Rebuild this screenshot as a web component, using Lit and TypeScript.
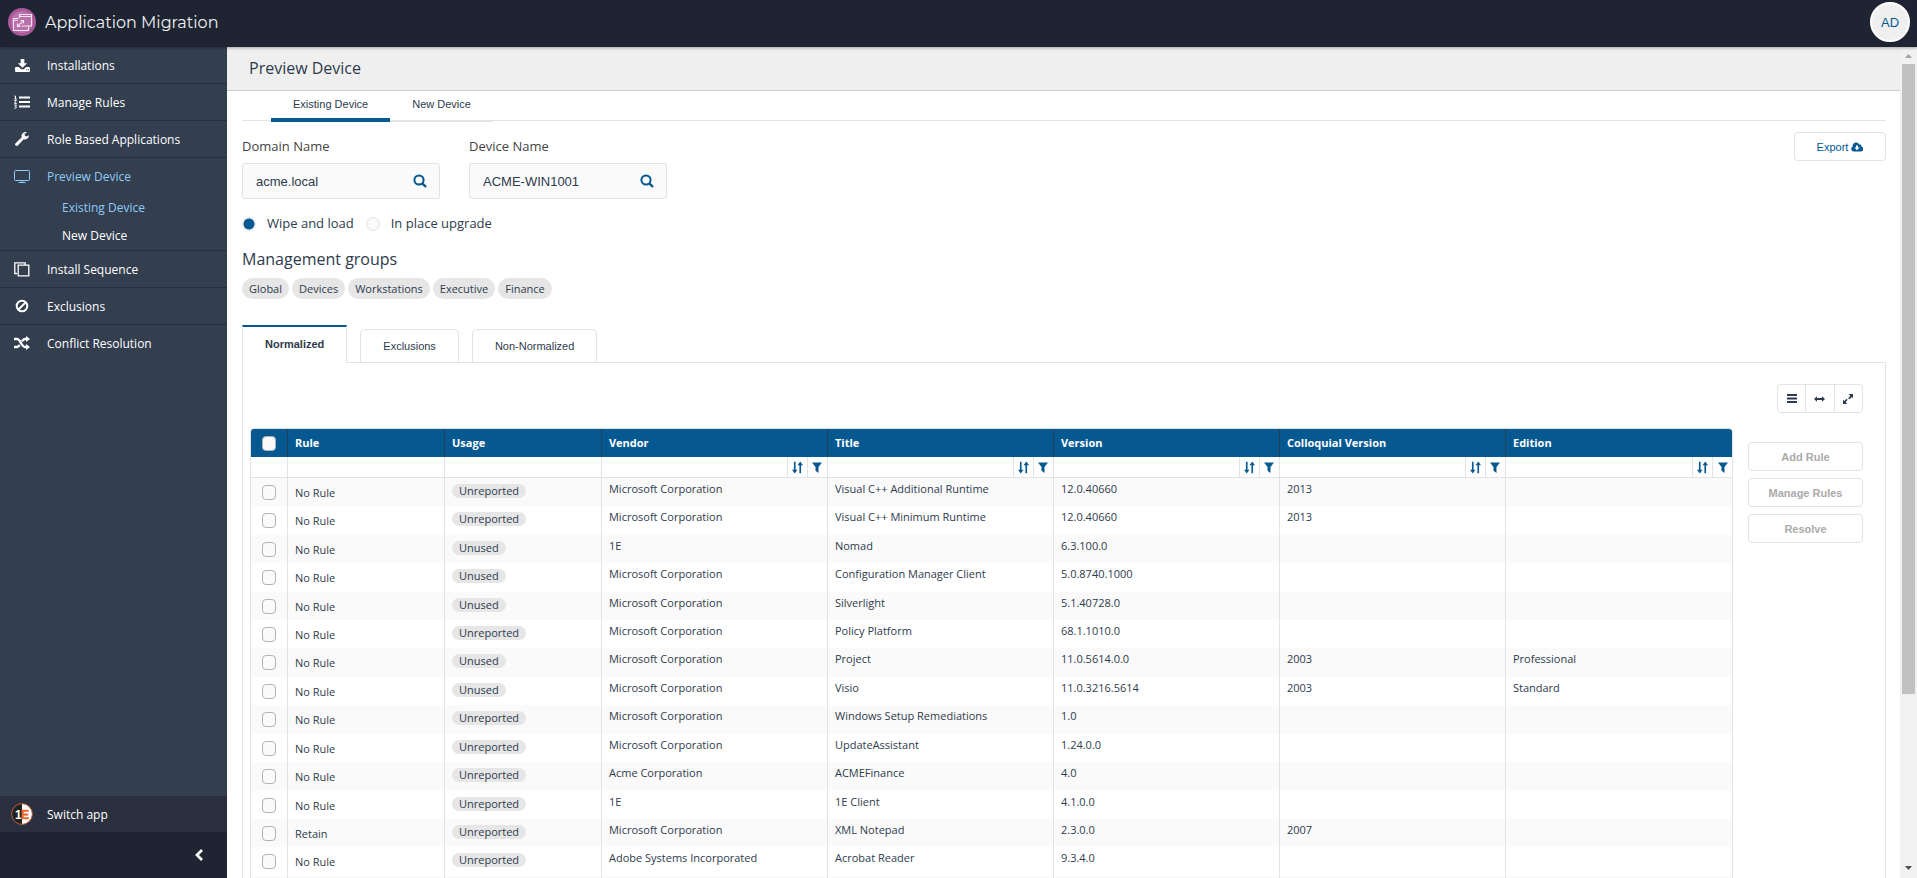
import { LitElement, html, css, svg, TemplateResult } from "lit";
import { customElement, state } from "lit/decorators.js";

const icon = (box: string, w: number, h: number, body: TemplateResult) =>
  html`<svg viewBox=${box} width=${w} height=${h} aria-hidden="true">${body}</svg>`;

const icons = {
  download: icon("0 0 16 14", 15, 13, svg`<path fill="currentColor" d="M6 0h4v4.500h3L8 9.500 3 4.500h3zM1 8.500h3.200L6.500 11h3l2.300-2.500H15a1 1 0 0 1 1 1V13a1 1 0 0 1-1 1H1a1 1 0 0 1-1-1V9.500a1 1 0 0 1 1-1zM12 11v1h1v-1zm2 0v1h1v-1z"/>`),
  list: icon("0 0 16 14", 16, 14, svg`<path fill="currentColor" d="M5 1.500h11v2H5zM5 6h11v2H5zM5 10.500h11v2H5z"/><path fill="none" stroke="currentColor" stroke-width="1" d="M.5 1h1v3M.2 4h2.600M.3 5.500h2L.5 8.400h2.300M.3 10h2.200L1.300 11.500c2 0 1.500 2-1 1.700"/>`),
  wrench: icon("0 0 14 14", 14, 14, svg`<path fill="currentColor" d="M13.800 3.200 11.500 4.600 9.700 3.500V1.700L12 .3C10 -.5 7.600.6 6.800 2.500c-.4.900-.4 1.900 0 2.800L.6 11.200c-.8.800-.6 1.800 0 2.300.7.600 1.600.5 2.200-.1l5.900-6.200c3 .9 5.600-1.400 5.100-4z"/>`),
  screen: icon("0 0 16 13", 16, 13, svg`<path fill="none" stroke="currentColor" d="M1.500.5h13a1 1 0 0 1 1 1v8a1 1 0 0 1-1 1h-13a1 1 0 0 1-1-1v-8a1 1 0 0 1 1-1zM4.500 12.500h7M8 10.500v2"/>`),
  copy: icon("0 0 16 15", 16, 15, svg`<path fill="none" stroke="currentColor" stroke-width="1.300" d="M4.200 3.200h10.600v10.600H4.200zM3 11.500H.8V.8h10.400V3"/>`),
  ban: icon("0 0 14 14", 14, 14, svg`<g fill="none" stroke="currentColor" stroke-width="2"><circle cx="7" cy="7" r="5.300"/><path d="M3.500 10.500l7-7"/></g>`),
  shuffle: icon("0 0 16 14", 16, 14, svg`<path fill="none" stroke="currentColor" stroke-width="2.300" d="M0 3h3c3.500 0 4.500 8 8 8h2M0 11h3c1.200 0 2-1 2.700-2M8 5.300C8.800 4 9.600 3 11 3h2"/><path fill="currentColor" d="M12 0l4 3-4 3zM12 8l4 3-4 3z"/>`),
  search: icon("0 0 14 14", 14, 14, svg`<g fill="none" stroke="currentColor" stroke-width="2"><circle cx="6" cy="6" r="4.600"/><path stroke-width="2.400" d="M9.300 9.300l3.700 3.700"/></g>`),
  cloud: icon("0 0 13 10", 12, 10, svg`<path fill="currentColor" fill-rule="evenodd" d="M3 10a3 3 0 0 1-1.200-5.600C1.600 2 3.200.1 5.500.1c1.700 0 2.900.8 3.500 2.300 1.200-.4 2.500.6 2.200 2.100A2.800 2.800 0 0 1 10.400 10zM5.400 3.300v2.200H3.600L6.500 8.600l2.900-3.100H7.600V3.300z"/>`),
  sort: icon("0 0 12 13", 11, 13, svg`<path fill="none" stroke="currentColor" stroke-width="1.800" d="M3 .2v10M9 2.500v10.300"/><path fill="currentColor" d="M0 9h6l-3 4zM6 4h6L9 0z"/>`),
  funnel: icon("0 0 10 11", 10, 11, svg`<path fill="currentColor" d="M0 .5h10L6.500 5v6L3.500 8.800V5z"/>`),
  bars: icon("0 0 10 9", 10, 9, svg`<path fill="currentColor" d="M0 0h10v2H0zM0 3.500h10v2H0zM0 7h10v2H0z"/>`),
  wide: icon("0 0 11 6", 11, 6, svg`<path fill="currentColor" d="M0 3l3-2.800V2h5V.2L11 3 8 5.800V4H3v1.800z"/>`),
  expand: icon("0 0 10 10", 10, 10, svg`<path fill="currentColor" d="M5.700 0H10v4.300L8.700 3 6.500 5.200l-1.300-1L7.300 1.800zM4.300 10H0V5.700L1.300 7l2.200-2.200 1.100 1L2.700 8.200z"/>`),
  back: icon("0 0 8 12", 8, 12, svg`<path fill="none" stroke="currentColor" stroke-width="2.700" d="M7 1 2 6l5 5"/>`),
  logo: icon("0 0 28 28", 28, 28, svg`<circle cx="14" cy="14" r="14" fill="#a9599a"/><circle cx="14" cy="14" r="11" fill="#ba72aa"/><g fill="none" stroke="#f6e4f2" stroke-width="1.100"><path d="M11.500 10V6.500h12v11.500h-3.500M11.500 8.500h12M20.500 18v4.500h-15v-12h5M5.500 12.300h4.500"/><path d="M9.500 18.500l6-6M12.500 12.500h3v3M9.500 15.500v3h3M13.500 18h7"/></g>`),
};

const nav: { label: string; icon: unknown; open?: boolean }[] = [
  { label: "Installations", icon: icons.download },
  { label: "Manage Rules", icon: icons.list },
  { label: "Role Based Applications", icon: icons.wrench },
  { label: "Preview Device", icon: icons.screen, open: true },
  { label: "Install Sequence", icon: icons.copy },
  { label: "Exclusions", icon: icons.ban },
  { label: "Conflict Resolution", icon: icons.shuffle },
];

const columns = ["Rule", "Usage", "Vendor", "Title", "Version", "Colloquial Version", "Edition"];
const ms = "Microsoft Corporation";
const rows: string[][] = [
  ["No Rule", "Unreported", ms, "Visual C++ Additional Runtime", "12.0.40660", "2013", ""],
  ["No Rule", "Unreported", ms, "Visual C++ Minimum Runtime", "12.0.40660", "2013", ""],
  ["No Rule", "Unused", "1E", "Nomad", "6.3.100.0", "", ""],
  ["No Rule", "Unused", ms, "Configuration Manager Client", "5.0.8740.1000", "", ""],
  ["No Rule", "Unused", ms, "Silverlight", "5.1.40728.0", "", ""],
  ["No Rule", "Unreported", ms, "Policy Platform", "68.1.1010.0", "", ""],
  ["No Rule", "Unused", ms, "Project", "11.0.5614.0.0", "2003", "Professional"],
  ["No Rule", "Unused", ms, "Visio", "11.0.3216.5614", "2003", "Standard"],
  ["No Rule", "Unreported", ms, "Windows Setup Remediations", "1.0", "", ""],
  ["No Rule", "Unreported", ms, "UpdateAssistant", "1.24.0.0", "", ""],
  ["No Rule", "Unreported", "Acme Corporation", "ACMEFinance", "4.0", "", ""],
  ["No Rule", "Unreported", "1E", "1E Client", "4.1.0.0", "", ""],
  ["Retain", "Unreported", ms, "XML Notepad", "2.3.0.0", "2007", ""],
  ["No Rule", "Unreported", "Adobe Systems Incorporated", "Acrobat Reader", "9.3.4.0", "", ""],
];

@customElement("app-table")
class AppTable extends LitElement {
  static styles = css`
    :host { display: block; flex: 1; min-width: 0; }
    .frame { border: 1px solid #e3e3e3; border-radius: 4px 4px 0 0; overflow: hidden; }
    .grid { width: 100%; table-layout: fixed; border-collapse: separate; border-spacing: 0; font-size: 11px; line-height: 16px; color: #2e3b4c; }
    .pick { width: 37px; }
    .narrow { width: 10.6%; }
    th, td { box-sizing: border-box; padding: 0 7px; text-align: left; white-space: nowrap; overflow: hidden; border-right: 1px solid #e3e3e3; }
    th:last-child, td:last-child { border-right: 0; }
    .head th { height: 28px; background: #065891; color: #fff; border-right-color: #24405c; font-weight: 700; }
    .filters td { height: 21px; padding: 0; border-bottom: 1px solid #e3e3e3; }
    .tools { display: flex; justify-content: flex-end; height: 20px; }
    .tool { width: 20px; padding: 0; border: 0; border-left: 1px solid #e3e3e3; background: none; color: #065891; display: grid; place-items: center; }
    .row td { height: 28px; vertical-align: top; padding-top: 3px; }
    .row:nth-child(7n + 2) td, .row:nth-child(7n + 4) td, .row:nth-child(7n) td { height: 29px; }
    .row:nth-child(odd) td { background: #fafafa; }
    .row .rule { padding-top: 7px; }
    .row .usage { padding-top: 6px; }
    .center, .row .center { text-align: center; padding: 0; }
    .row .center { padding-top: 7px; }
    .badge { display: inline-block; vertical-align: top; height: 14px; line-height: 14px; padding: 0 7px; border-radius: 7px; background: #e6e6e6; }
    .tick { appearance: none; display: block; box-sizing: border-box; width: 14px; height: 15px; margin: 0 auto; border: 1px solid #b3b3b3; border-radius: 4px; background: #fafafa; }
  `;
  render() {
    return html`<div class="frame"><table class="grid">
      <colgroup><col class="pick" /><col class="narrow" /><col class="narrow" /><col /><col /><col /><col /><col /></colgroup>
      <thead>
        <tr class="head"><th class="center"><input class="tick" type="checkbox" aria-label="Select all" /></th>${columns.map((c) => html`<th>${c}</th>`)}</tr>
        <tr class="filters"><td></td>${columns.map((c, i) => html`<td>${i < 2 ? "" : html`<div class="tools">
          <button class="tool" aria-label="Sort by ${c}">${icons.sort}</button><button class="tool" aria-label="Filter ${c}">${icons.funnel}</button></div>`}</td>`)}</tr>
      </thead>
      <tbody>
        ${rows.map((r) => html`<tr class="row">
          <td class="center"><input class="tick" type="checkbox" aria-label="Select ${r[3]}" /></td>
          <td class="rule">${r[0]}</td><td class="usage"><span class="badge">${r[1]}</span></td>
          ${r.slice(2).map((v) => html`<td>${v}</td>`)}</tr>`)}
        <tr class="row"><td></td>${columns.map(() => html`<td></td>`)}</tr>
      </tbody></table></div>`;
  }
}

@customElement("app-root")
class AppRoot extends LitElement {
  @state() mode = "wipe";

  static styles = css`
    :host { display: grid; grid-template: 47px minmax(0, 1fr) / 227px minmax(0, 1fr); height: 100vh; overflow: hidden; font-family: "Open Sans", sans-serif; color: #2e3b4c; background: #fff; }
    button, input { font-family: inherit; }
    a { color: inherit; text-decoration: none; }
    svg { display: block; }
    .top { grid-column: 1 / -1; z-index: 1; display: flex; align-items: center; justify-content: space-between; padding: 0 7px 3px 8px; background: #1e2431; box-shadow: 0 1px 3px rgba(0, 0, 0, 0.3); color: #fff; }
    .brand { display: flex; align-items: center; gap: 9px; font-family: Montserrat, "Open Sans", sans-serif; font-size: 16px; color: #eef0f3; }
    .avatar { width: 40px; height: 40px; border: 2px solid #fff; box-sizing: border-box; border-radius: 50%; background: #efefef; color: #065891; font: 13px "Liberation Sans", sans-serif; padding: 0; }
    .side { display: flex; flex-direction: column; min-height: 0; background: #333e4f; color: #fff; font-size: 12px; font-weight: 500; }
    .menu { flex: 1; margin: 0; padding: 0; list-style: none; }
    .entry { border-bottom: 1px solid #262f3d; }
    .entry:last-child { border-bottom: 0; }
    .link, .switch { display: grid; grid-template-columns: 44px 1fr; align-items: center; column-gap: 3px; height: 36px; }
    .glyph { display: grid; justify-items: center; }
    .open { color: #8ecbf7; }
    .subs { list-style: none; margin: 0; padding: 0 0 0 62px; line-height: 28px; }
    .sub { color: #fff; }
    .sub.here { color: #8ecbf7; }
    .switch { background: #2a303f; }
    .foot { display: flex; justify-content: flex-end; align-items: center; height: 46px; padding-right: 24px; background: #1e2431; }
    .collapse { border: 0; padding: 0; background: none; color: #fff; }
    .body { display: grid; grid-template-columns: minmax(0, 1fr) 17px; min-height: 0; }
    .page { overflow: hidden; }
    .title { margin: 0; height: 43px; line-height: 42px; padding-left: 22px; background: #efefef; border-bottom: 1px solid #ccc; font-size: 16px; font-weight: 500; }
    .content { padding: 0 14px 0 15px; }
    .tabs { display: flex; height: 29px; padding-left: 29px; border-bottom: 1px solid #e3e3e3; font: 11px "Liberation Sans", sans-serif; }
    .tab { height: 31px; box-sizing: border-box; padding: 7px 22px 0; border-bottom: 2px solid #e3e3e3; }
    .tab.on { border-bottom: 4px solid #065891; }
    .bar { display: flex; justify-content: space-between; align-items: flex-start; padding-top: 11px; }
    .fields { display: flex; gap: 29px; padding-top: 4px; }
    .label { display: block; font-size: 13px; font-weight: 500; line-height: 20px; margin-bottom: 7px; color: #444; }
    .box { display: flex; align-items: center; box-sizing: border-box; width: 198px; height: 36px; padding: 0 12px 0 13px; border: 1px solid #e3e3e3; border-radius: 3px; background: #fafafa; }
    .input { flex: 1; min-width: 0; border: 0; padding: 0; outline: 0; background: none; font: 13px "Liberation Sans", sans-serif; color: #2e3b4c; }
    .find { border: 0; padding: 0; background: none; color: #065891; }
    .export { display: flex; align-items: center; justify-content: center; gap: 3px; width: 92px; height: 29px; border: 1px solid #e3e3e3; border-radius: 4px; background: #fff; color: #065891; font: 11px "Liberation Sans", sans-serif; padding: 0; }
    .modes { display: flex; align-items: center; gap: 12px; height: 20px; margin-top: 14px; font-size: 13px; }
    .mode { display: flex; align-items: center; gap: 11px; }
    .radio { appearance: none; margin: 2px 0 0; width: 14px; height: 14px; box-sizing: border-box; border: 1px solid #e3e3e3; border-radius: 50%; background: #fafafa; }
    .radio:checked { background: radial-gradient(circle, #065891 0 5px, #fafafa 6px); }
    .heading { margin: 13px 0 0; font-size: 16px; line-height: 26px; font-weight: 400; }
    .chips { display: flex; gap: 3px; margin-top: 6px; font-size: 11px; line-height: 21px; }
    .chip { padding: 0 7px; border-radius: 11px; background: #e6e6e6; }
    .cards { display: flex; align-items: flex-end; gap: 13px; margin-top: 26px; font: 11px "Liberation Sans", sans-serif; }
    .card { box-sizing: border-box; height: 33px; line-height: 33px; padding: 0 22px; border: 1px solid #e3e3e3; border-bottom: 0; border-radius: 5px 5px 0 0; }
    .card.on { height: 38px; line-height: 34px; margin-bottom: -1px; border-top: 2px solid #065891; border-radius: 0; background: #fff; font-weight: 700; }
    .panel { border: 1px solid #e3e3e3; padding: 21px 22px 0 7px; }
    .views { display: flex; width: 86px; margin: 0 0 15px auto; box-sizing: border-box; border: 1px solid #e3e3e3; border-radius: 4px; }
    .view { flex: 1; height: 27px; padding: 0; border: 0; background: none; color: #2e3b4c; display: grid; place-items: center; }
    .view + .view { border-left: 1px solid #e3e3e3; }
    .split { display: flex; align-items: flex-start; gap: 15px; }
    .actions { display: flex; flex-direction: column; gap: 7px; width: 115px; padding-top: 14px; }
    .action { height: 29px; border: 1px solid #e3e3e3; border-radius: 4px; background: #fff; color: #aaa; font: bold 11px "Liberation Sans", sans-serif; }
    .scroll { display: flex; flex-direction: column; align-items: center; padding-bottom: 2px; background: #f1f1f1; color: #a3a3a3; }
    .arrow { height: 17px; display: grid; place-items: center; }
    .arrow.down { margin-top: auto; color: #505050; }
    .thumb { width: 13px; height: 76%; background: #c1c1c1; }
    .oneE { font: bold 12px "Liberation Sans", sans-serif; }
  `;

  field(id: string, label: string, value: string) {
    return html`<div><label class="label" for=${id}>${label}</label>
      <div class="box"><input class="input" id=${id} .value=${value} /><button class="find" aria-label="Search">${icons.search}</button></div></div>`;
  }

  choice(id: string, label: string) {
    return html`<label class="mode"><input class="radio" type="radio" name="mode" .checked=${this.mode === id} @change=${() => (this.mode = id)} />${label}</label>`;
  }

  render() {
    return html`
      <header class="top"><div class="brand">${icons.logo}<span>Application Migration</span></div><button class="avatar">AD</button></header>
      <nav class="side">
        <ul class="menu">
          ${nav.map((n) => html`<li class="entry ${n.open ? "open" : ""}"><a class="link" href="#"><span class="glyph">${n.icon}</span>${n.label}</a>
            ${n.open ? html`<ul class="subs"><li><a class="sub here" href="#">Existing Device</a></li><li><a class="sub" href="#">New Device</a></li></ul>` : ""}</li>`)}
        </ul>
        <a class="switch" href="#"><span class="glyph"><svg width="22" height="22" viewBox="0 0 22 22" aria-hidden="true">
          <circle cx="11" cy="11" r="10.400" fill="#fff" /><path d="M11 .6a10.400 10.400 0 0 0 0 20.800z" fill="#222" /><circle cx="11" cy="11" r="10.400" fill="none" stroke="#b4532c" />
          <text class="oneE" x="4" y="15.500" fill="#fff">1</text><text class="oneE" x="10" y="15.500" fill="#ee6a25" stroke="#ee6a25" stroke-width=".6">E</text></svg></span>Switch app</a>
        <div class="foot"><button class="collapse" aria-label="Collapse menu">${icons.back}</button></div>
      </nav>
      <div class="body">
        <main class="page">
          <h1 class="title">Preview Device</h1>
          <div class="content">
            <div class="tabs"><a class="tab on" href="#">Existing Device</a><a class="tab" href="#">New Device</a></div>
            <div class="bar"><div class="fields">${this.field("domain", "Domain Name", "acme.local")}${this.field("device", "Device Name", "ACME-WIN1001")}</div>
              <button class="export">Export ${icons.cloud}</button></div>
            <div class="modes">${this.choice("wipe", "Wipe and load")}${this.choice("place", "In place upgrade")}</div>
            <h2 class="heading">Management groups</h2>
            <div class="chips">${["Global", "Devices", "Workstations", "Executive", "Finance"].map((c) => html`<span class="chip">${c}</span>`)}</div>
            <div class="cards"><a class="card on" href="#">Normalized</a><a class="card" href="#">Exclusions</a><a class="card" href="#">Non-Normalized</a></div>
            <section class="panel">
              <div class="views"><button class="view" aria-label="Density">${icons.bars}</button><button class="view" aria-label="Fit width">${icons.wide}</button><button class="view" aria-label="Full screen">${icons.expand}</button></div>
              <div class="split"><app-table></app-table>
                <div class="actions">${["Add Rule", "Manage Rules", "Resolve"].map((a) => html`<button class="action" disabled>${a}</button>`)}</div></div>
            </section>
          </div>
        </main>
        <div class="scroll" aria-hidden="true">
          <span class="arrow"><svg width="7" height="4" viewBox="0 0 7 4"><path fill="currentColor" d="M0 4l3.500-4L7 4z" /></svg></span>
          <span class="thumb"></span>
          <span class="arrow down"><svg width="7" height="4" viewBox="0 0 7 4"><path fill="currentColor" d="M0 0h7L3.500 4z" /></svg></span>
        </div>
      </div>`;
  }
}
